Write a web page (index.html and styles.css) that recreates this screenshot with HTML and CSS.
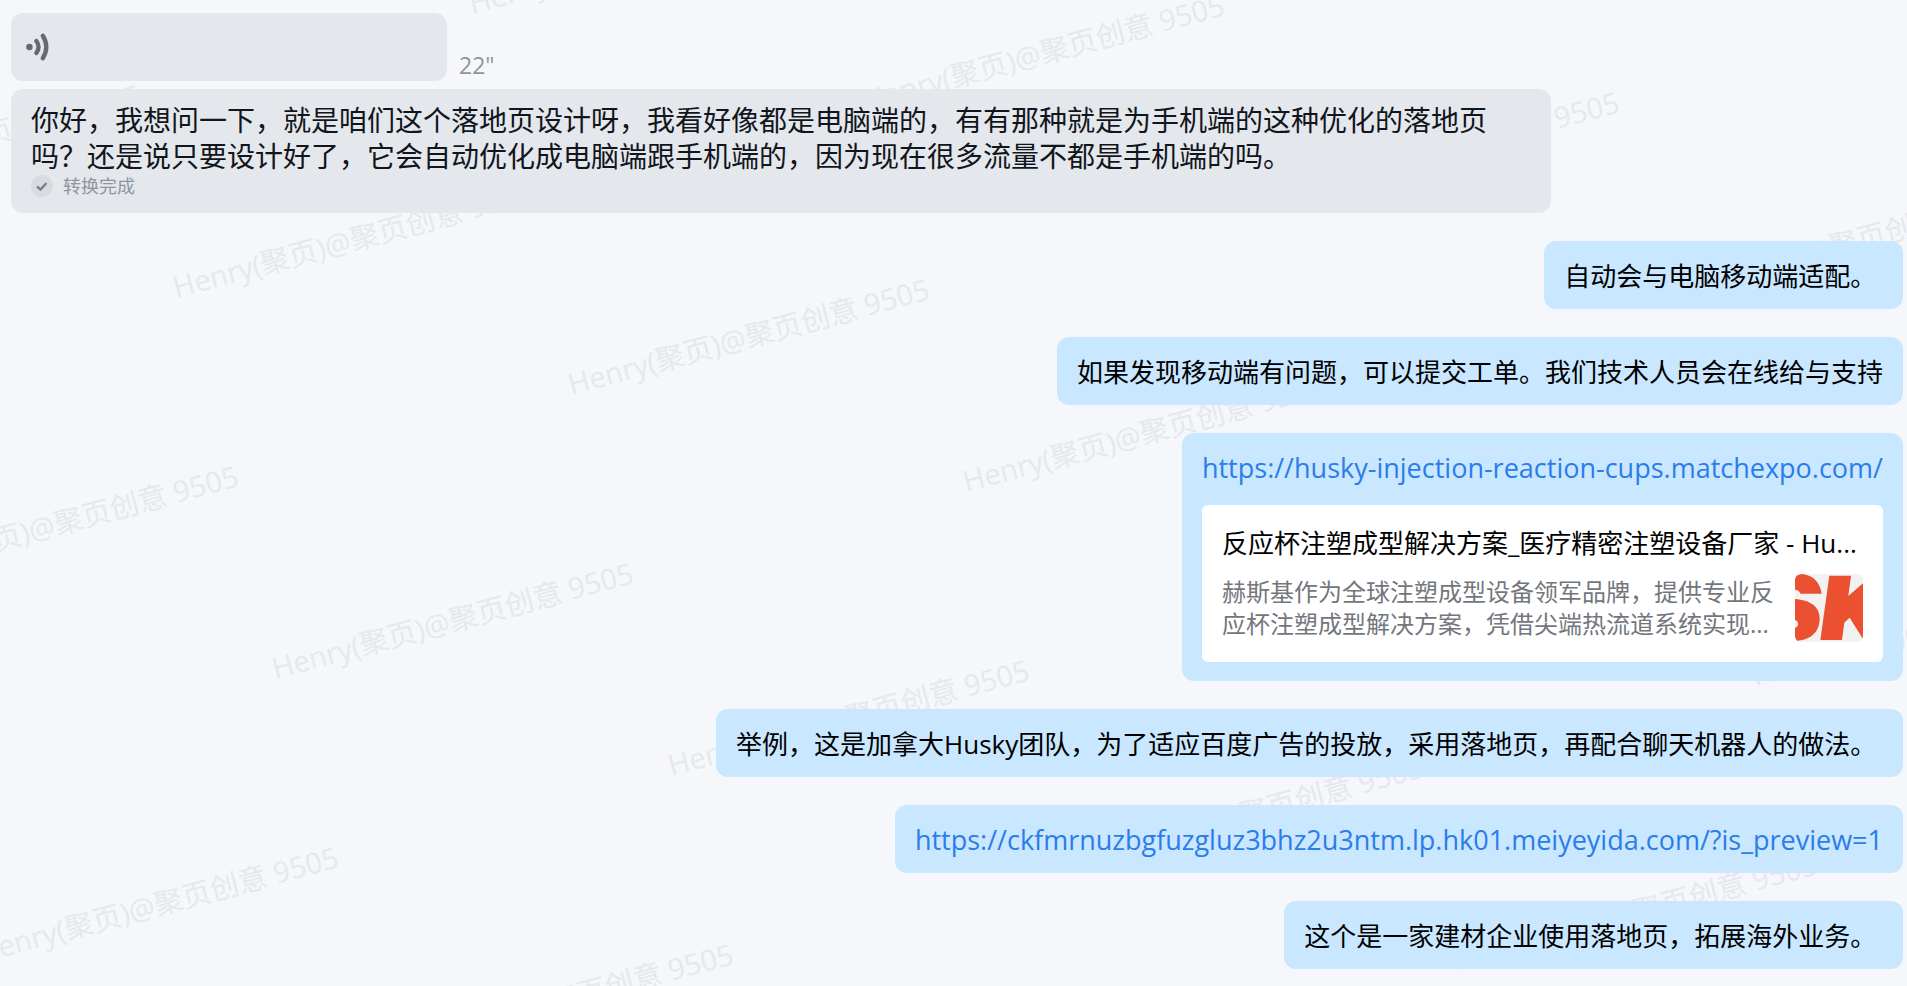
FILE: index.html
```html
<!DOCTYPE html>
<html lang="zh-CN">
<head>
<meta charset="utf-8">
<title>聊天记录</title>
<link rel="stylesheet" href="styles.css">
</head>
<body>
<div class="watermark" aria-hidden="true">
  <span class="mark" style="left:-217px;top:204px">Henry(聚页)@聚页创意 9505</span>
  <span class="mark" style="left:473px;top:17px">Henry(聚页)@聚页创意 9505</span>
  <span class="mark" style="left:867px;top:114px">Henry(聚页)@聚页创意 9505</span>
  <span class="mark" style="left:1262px;top:211px">Henry(聚页)@聚页创意 9505</span>
  <span class="mark" style="left:1656px;top:308px">Henry(聚页)@聚页创意 9505</span>
  <span class="mark" style="left:177px;top:301px">Henry(聚页)@聚页创意 9505</span>
  <span class="mark" style="left:572px;top:398px">Henry(聚页)@聚页创意 9505</span>
  <span class="mark" style="left:967px;top:495px">Henry(聚页)@聚页创意 9505</span>
  <span class="mark" style="left:1361px;top:592px">Henry(聚页)@聚页创意 9505</span>
  <span class="mark" style="left:1756px;top:689px">Henry(聚页)@聚页创意 9505</span>
  <span class="mark" style="left:-119px;top:585px">Henry(聚页)@聚页创意 9505</span>
  <span class="mark" style="left:276px;top:682px">Henry(聚页)@聚页创意 9505</span>
  <span class="mark" style="left:672px;top:779px">Henry(聚页)@聚页创意 9505</span>
  <span class="mark" style="left:1066px;top:876px">Henry(聚页)@聚页创意 9505</span>
  <span class="mark" style="left:1460px;top:973px">Henry(聚页)@聚页创意 9505</span>
  <span class="mark" style="left:-19px;top:966px">Henry(聚页)@聚页创意 9505</span>
  <span class="mark" style="left:376px;top:1063px">Henry(聚页)@聚页创意 9505</span>
</div>
<main class="chat">
  <section class="received">
    <div class="voice-row">
      <button class="bubble voice" type="button" aria-label="播放语音">
        <svg class="voice-icon" viewBox="0 0 24 28" fill="none">
          <circle cx="4" cy="14" r="3" fill="#646a73"/>
          <path d="M10.500 8.500Q14.500 14 10.500 19.500M16.500 3.500Q23 14 16.500 24.500" stroke="#646a73" stroke-width="4" stroke-linecap="round"/>
        </svg>
      </button>
      <span class="duration">22"</span>
    </div>
    <div class="bubble transcript">
      <p class="transcript-text">你好，我想问一下，就是咱们这个落地页设计呀，我看好像都是电脑端的，有有那种就是为手机端的这种优化的落地页吗？还是说只要设计好了，它会自动优化成电脑端跟手机端的，因为现在很多流量不都是手机端的吗。</p>
      <div class="status">
        <svg class="status-icon" viewBox="0 0 22 22" fill="none">
          <circle cx="11" cy="11" r="11" fill="#d8dbe0"/>
          <path d="M6 11.500L9.500 14.500L15.500 8" stroke="#7c828b" stroke-width="2.500"/>
        </svg>
        <span>转换完成</span>
      </div>
    </div>
  </section>
  <p class="bubble sent">自动会与电脑移动端适配。&nbsp;</p>
  <p class="bubble sent">如果发现移动端有问题，可以提交工单。我们技术人员会在线给与支持</p>
  <div class="bubble sent">
    <a class="link" href="https://husky-injection-reaction-cups.matchexpo.com/">https://husky-injection-reaction-cups.matchexpo.com/</a>
    <article class="card">
      <h2 class="card-title">反应杯注塑成型解决方案_医疗精密注塑设备厂家 - Hu...</h2>
      <div class="card-body">
        <p class="card-text">赫斯基作为全球注塑成型设备领军品牌，提供专业反应杯注塑成型解决方案，凭借尖端热流道系统实现...</p>
        <svg class="card-logo" viewBox="0 0 204 204" role="img" aria-label="Husky">
          <rect width="204" height="204" fill="#f2f2f2"/>
          <path d="M0 5Q8 0 24 0Q72 8 80 59H16Q14 49 0 47ZM0 75C45 79 74 96 74 133C74 174 50 198 0 201V162Q10 157 9 149Q9 141 0 138Z" fill="#eb5030"/>
          <path d="M103 5H168L160 66L204 28V195L164 131L148 146L141 198H76Z" fill="#eb5030"/>
        </svg>
      </div>
    </article>
  </div>
  <p class="bubble sent">举例，这是加拿大Husky团队，为了适应百度广告的投放，采用落地页，再配合聊天机器人的做法。&nbsp;</p>
  <div class="bubble sent"><a class="link" href="https://ckfmrnuzbgfuzgluz3bhz2u3ntm.lp.hk01.meiyeyida.com/?is_preview=1">https://ckfmrnuzbgfuzgluz3bhz2u3ntm.lp.hk01.meiyeyida.com/?is_preview=1</a></div>
  <p class="bubble sent">这个是一家建材企业使用落地页，拓展海外业务。&nbsp;</p>
</main>
</body>
</html>
```
FILE: styles.css
```css
* {
  box-sizing: border-box;
}

body {
  position: relative;
  min-height: 100vh;
  margin: 0;
  overflow-x: hidden;
  background: #f5f7fb;
  color: #000;
  font-family: "Open Sans", "Noto Sans CJK SC", sans-serif;
  font-size: 26px;
  line-height: 36px;
}

p,
h2 {
  margin: 0;
}

.watermark {
  position: absolute;
  inset: 0;
  overflow: hidden;
  color: #e6e8ec;
  font-size: 29px;
  line-height: 28px;
  pointer-events: none;
}

.mark {
  position: absolute;
  white-space: nowrap;
  transform: translateY(-100%) rotate(-15deg);
  transform-origin: left bottom;
}

.chat {
  position: relative;
  display: flex;
  flex-direction: column;
  align-items: flex-start;
  gap: 28px;
  padding: 13px 4px 16px 11px;
}

.received {
  display: flex;
  flex-direction: column;
  align-items: flex-start;
  gap: 8px;
}

.bubble {
  padding: 17px 20px 15px;
  border-radius: 12px;
}

.voice-row {
  display: flex;
  align-items: flex-end;
  gap: 12px;
}

.voice {
  display: flex;
  align-items: center;
  width: 436px;
  height: 68px;
  padding: 0 14px;
  border: 0;
  background: #e4e7eb;
}

.voice-icon {
  width: 26px;
  height: 30px;
}

.duration {
  color: #8f959e;
  font-size: 23px;
  line-height: 32px;
}

.transcript {
  max-width: calc(100% - 352px);
  padding: 13px 20px 15px;
  background: #e4e7eb;
  color: #11151c;
}

.transcript-text {
  font-size: 28px;
}

.status {
  display: flex;
  align-items: center;
  gap: 10px;
  color: #8f959e;
  font-size: 18px;
  line-height: 24px;
}

.status-icon {
  width: 22px;
  height: 22px;
}

.sent {
  align-self: flex-end;
  background: #c9e7ff;
}

.link {
  display: block;
  color: #2b7de9;
  font-size: 27px;
  text-decoration: none;
}

.card {
  width: 0;
  min-width: 100%;
  margin: 19px 0 4px;
  padding: 20px;
  border-radius: 6px;
  background: #fff;
}

.card-title {
  overflow: hidden;
  font-size: 26px;
  font-weight: 400;
  text-overflow: ellipsis;
  white-space: nowrap;
}

.card-body {
  display: flex;
  align-items: center;
  gap: 16px;
  padding-top: 13px;
}

.card-text {
  flex: 1;
  color: #73777d;
  font-size: 24px;
  line-height: 32px;
}

.card-logo {
  flex: none;
  width: 68px;
  height: 68px;
  border-radius: 6px;
}
```
